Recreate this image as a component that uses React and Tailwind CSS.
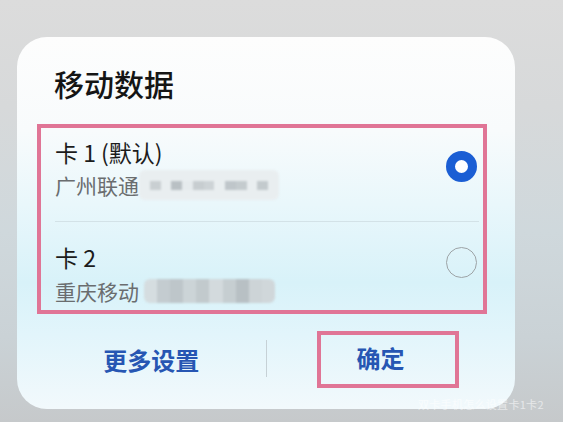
import React from "react";

const font = { fontFamily: '"Noto Sans CJK SC", "Noto Sans", sans-serif' };

function Mosaic({ tiles, className, inner }) {
  return (
    <div className={`flex items-center shrink-0 blur-[1.2px] rounded-[6px] overflow-hidden ${className}`}>
      {tiles.map((c, i) => (
        <div key={i} className={`flex-1 ${inner}`} style={{ background: c }} />
      ))}
    </div>
  );
}

export default function App() {
  return (
    <div
      className="relative w-[563px] h-[422px] overflow-hidden bg-[linear-gradient(to_bottom,#dcdcdc_0%,#d7d9da_25%,#cfd8dc_55%,#cad2d6_80%,#c6c9cb_100%)] pt-[37px] pl-[17px]"
      style={font}
    >
      <div className="w-[498px] h-[372px] rounded-[30px] bg-[linear-gradient(to_bottom,#fdfdfd_0%,#f8fbfc_25%,#e9f7fb_45%,#d8f2f9_66%,#e2f5fb_80%,#f2f9fc_100%)] flex flex-col pt-[28px]">
        <div className="shrink-0 pl-[37px] text-[30px] leading-[36px] font-medium text-[#151515]">移动数据</div>

        <div className="shrink-0 ml-[20px] mt-[23px] w-[450px] h-[190px] border-[4px] border-[#e07596] flex flex-col">
          {/* row 1 */}
          <div className="shrink-0 h-[93px] flex items-start pl-[14px] pr-[6px]">
            <div className="flex-1 flex flex-col pt-[11px]">
              <div className="text-[23px] leading-[26px] text-[#1c1c1c]">卡 1 (默认)</div>
              <div className="mt-[7px] flex items-center h-[26px]">
                <span className="text-[21px] leading-[26px] text-[#6a6d6f]">广州联通</span>
                <Mosaic
                  className="w-[140px] h-[30px] bg-[#e9eef0]"
                  inner="h-[9px]"
                  tiles={["#e9eef0", "#c9cfd2", "#e9eef0", "#b9c0c4", "#e6ebed", "#c7cdd0", "#cdd3d6", "#e9eef0", "#bfc6ca", "#c4cbce", "#e9eef0", "#c3cacd", "#e9eef0"]}
                />
              </div>
            </div>
            <div className="shrink-0 mt-[23px] w-[31px] h-[31px] rounded-full border-[9px] border-[#1b5ed4] bg-white" />
          </div>
          <div className="shrink-0 ml-[14px] mr-[4px] h-px bg-[#d3e2e7]" />
          {/* row 2 */}
          <div className="flex-1 flex items-start pl-[14px] pr-[6px]">
            <div className="flex-1 flex flex-col pt-[22px]">
              <div className="text-[23px] leading-[26px] text-[#1c1c1c]">卡 2</div>
              <div className="mt-[8px] flex items-center h-[26px]">
                <span className="text-[21px] leading-[26px] text-[#6a6d6f]">重庆移动</span>
                <Mosaic
                  className="ml-[5px] w-[131px] h-[24px]"
                  inner="h-full"
                  tiles={["#d5dde0", "#c4ccd0", "#bec6ca", "#ccd4d7", "#c2cacd", "#d3dadd", "#c6ced1", "#b8c0c4", "#cdd4d7", "#d0d7da"]}
                />
              </div>
            </div>
            <div className="shrink-0 mt-[25px] w-[31px] h-[31px] rounded-full border-[1.5px] border-[#9da3a6]" />
          </div>
        </div>

        <div className="shrink-0 mt-[17px] px-[20px] grid grid-cols-[1fr_1px_1fr] items-center h-[57px]">
          <div className="flex justify-center pt-[1px]">
            <span className="text-[24px] leading-[30px] font-bold text-[#2656b3]">更多设置</span>
          </div>
          <div className="w-px h-[37px] bg-[#c6d1d6] -mt-[2px]" />
          <div className="flex">
            <div className="shrink-0 ml-[50px] w-[142px] h-[57px] border-[4px] border-[#e07596] flex items-center pl-[36px]">
              <span className="text-[24px] leading-[30px] font-bold text-[#2656b3] -mt-[3px]">确定</span>
            </div>
          </div>
        </div>
      </div>

      <div className="absolute left-[418px] top-[398px] text-[11px] leading-[13px] text-white/55 tracking-[0.3px]">
        双卡手机怎么设置卡1卡2
      </div>
    </div>
  );
}
